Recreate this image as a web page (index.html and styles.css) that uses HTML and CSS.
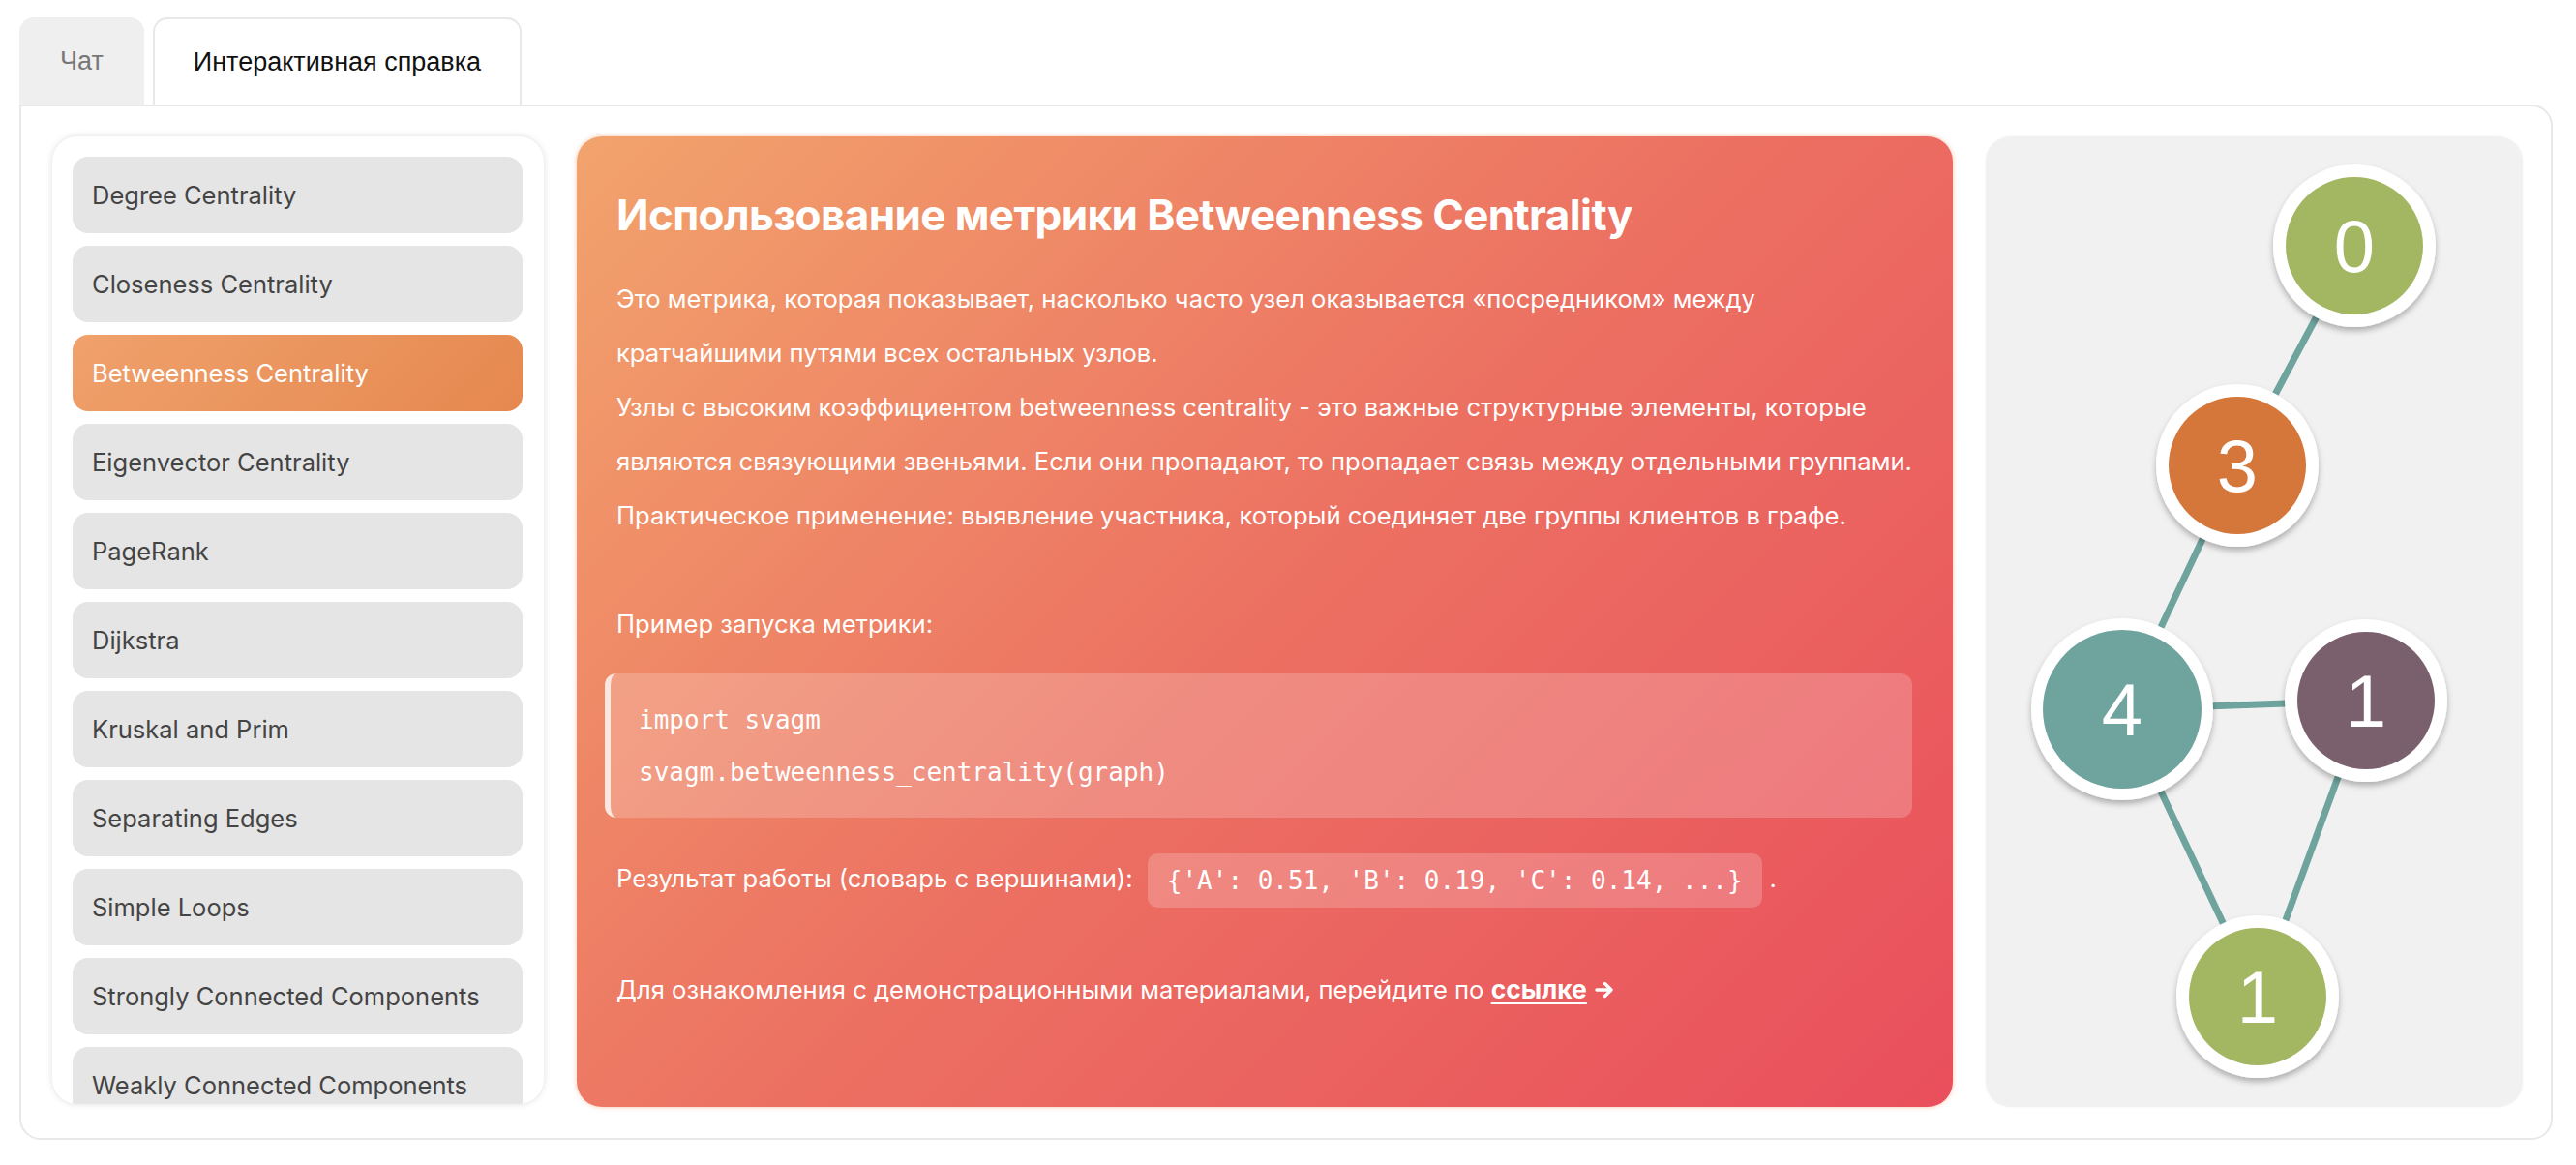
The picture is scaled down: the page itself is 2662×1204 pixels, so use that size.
FILE: index.html
```html
<!DOCTYPE html>
<html lang="ru">
<head>
<meta charset="utf-8">
<title>Интерактивная справка</title>
<link rel="stylesheet" href="styles.css">
</head>
<body>
<div class="tabs">
  <div class="tab">Чат</div>
  <div class="tab active">Интерактивная справка</div>
</div>
<main class="panel">
  <nav class="menu">
    <div class="menu-item">Degree Centrality</div>
    <div class="menu-item">Closeness Centrality</div>
    <div class="menu-item active">Betweenness Centrality</div>
    <div class="menu-item">Eigenvector Centrality</div>
    <div class="menu-item">PageRank</div>
    <div class="menu-item">Dijkstra</div>
    <div class="menu-item">Kruskal and Prim</div>
    <div class="menu-item">Separating Edges</div>
    <div class="menu-item">Simple Loops</div>
    <div class="menu-item">Strongly Connected Components</div>
    <div class="menu-item">Weakly Connected Components</div>
  </nav>
  <article class="doc">
    <h2 class="doc-title">Использование метрики Betweenness Centrality</h2>
    <p class="doc-text">Это метрика, которая показывает, насколько часто узел оказывается «посредником» между<br>кратчайшими путями всех остальных узлов.<br>Узлы с высоким коэффициентом betweenness centrality - это важные структурные элементы, которые<br>являются связующими звеньями. Если они пропадают, то пропадает связь между отдельными группами.<br>Практическое применение: выявление участника, который соединяет две группы клиентов в графе.<br><br>Пример запуска метрики:</p>
    <pre class="code">import svagm
svagm.betweenness_centrality(graph)</pre>
    <p class="doc-text">Результат работы (словарь с вершинами): <code class="pill">{'A': 0.51, 'B': 0.19, 'C': 0.14, ...}</code>.<br><br>Для ознакомления с демонстрационными материалами, перейдите по <a class="link" href="#">ссылке</a> <svg class="arrow" viewBox="0 0 22 22" xmlns="http://www.w3.org/2000/svg"><path d="M3 11h15M11.5 4.5 18 11l-6.5 6.5" fill="none" stroke="#fff" stroke-width="3.4" stroke-linecap="round" stroke-linejoin="round"/></svg></p>
  </article>
  <section class="graph">
    <svg class="graph-svg" viewBox="0 0 555 1003" xmlns="http://www.w3.org/2000/svg">
      <defs>
        <filter id="sh" x="-30%" y="-30%" width="160%" height="160%">
          <feDropShadow dx="0" dy="4" stdDeviation="3" flood-color="#000" flood-opacity="0.28"/>
        </filter>
      </defs>
      <g stroke="#6ea39e" stroke-width="7">
        <line x1="381" y1="113" x2="260" y2="340"/>
        <line x1="260" y1="340" x2="141" y2="592"/>
        <line x1="141" y1="592" x2="393" y2="583"/>
        <line x1="141" y1="592" x2="281" y2="889"/>
        <line x1="393" y1="583" x2="281" y2="889"/>
      </g>
      <g class="node">
        <circle cx="381" cy="113" r="84" fill="#fff" filter="url(#sh)"/>
        <circle cx="381" cy="113" r="71" fill="#a3b763"/>
        <text x="381" y="140">0</text>
      </g>
      <g class="node">
        <circle cx="260" cy="340" r="84" fill="#fff" filter="url(#sh)"/>
        <circle cx="260" cy="340" r="71" fill="#d5773b"/>
        <text x="260" y="367">3</text>
      </g>
      <g class="node">
        <circle cx="141" cy="592" r="94" fill="#fff" filter="url(#sh)"/>
        <circle cx="141" cy="592" r="82" fill="#6ea39e"/>
        <text x="141" y="619">4</text>
      </g>
      <g class="node">
        <circle cx="393" cy="583" r="84" fill="#fff" filter="url(#sh)"/>
        <circle cx="393" cy="583" r="71" fill="#7a606d"/>
        <text x="393" y="610">1</text>
      </g>
      <g class="node">
        <circle cx="281" cy="889" r="84" fill="#fff" filter="url(#sh)"/>
        <circle cx="281" cy="889" r="71" fill="#a3b763"/>
        <text x="281" y="916">1</text>
      </g>
    </svg>
  </section>
</main>
</body>
</html>
```

FILE: styles.css
```css
* {
  box-sizing: border-box;
}

html,
body {
  margin: 0;
  background: #ffffff;
}

body {
  padding: 18px 24px 0 20px;
  font-family: Inter, "Noto Sans", sans-serif;
}

.tabs {
  display: flex;
  gap: 9px;
  height: 90px;
}

.tab {
  display: flex;
  align-items: center;
  padding: 0 42px;
  background: #efefef;
  color: #777777;
  font-family: "Liberation Sans", Arial, sans-serif;
  font-size: 27px;
  border-radius: 15px 15px 0 0;
}

.tab.active {
  background: #ffffff;
  color: #111111;
  border: 2px solid #e8e8e8;
  border-bottom: none;
  padding: 0 40px;
}

.panel {
  display: grid;
  grid-template-columns: 508px 1fr 555px;
  gap: 34px;
  height: 1070px;
  padding: 31px 30px 32px 32px;
  border: 2px solid #e8e8e8;
  border-radius: 0 22px 22px 22px;
}

.menu {
  align-self: start;
  display: flex;
  flex-direction: column;
  gap: 13px;
  height: 1000px;
  padding: 21px 22px 0 21px;
  background: #ffffff;
  border-radius: 26px;
  box-shadow: 0 0 7px rgba(0, 0, 0, 0.13);
  overflow: hidden;
}

.menu-item {
  flex: none;
  display: flex;
  align-items: center;
  height: 79px;
  padding-left: 20px;
  background: #e5e5e5;
  color: #444444;
  font-size: 25.5px;
  border-radius: 16px;
}

.menu-item.active {
  background: linear-gradient(135deg, #f0a16c 0%, #e5884f 100%);
  color: #ffffff;
}

.doc {
  padding: 55px 42px 0 41px;
  background: linear-gradient(135deg, #f2a36c 0%, #ec7062 50%, #e94f5c 100%);
  color: #ffffff;
  border-radius: 26px;
  box-shadow: 0 0 5px rgba(240, 150, 100, 0.55);
}

.doc-title {
  margin: 0 0 33px;
  font-size: 44px;
  line-height: 52px;
  font-weight: 700;
  letter-spacing: -0.6px;
}

.doc-text {
  margin: 0;
  font-size: 25.6px;
  line-height: 56px;
  white-space: nowrap;
}

.code {
  margin: 23px 0 35px -12px;
  padding: 21px 29px 20px;
  background: rgba(255, 255, 255, 0.2);
  border-left: 6px solid rgba(255, 255, 255, 0.75);
  border-radius: 12px;
  font-family: "DejaVu Sans Mono", monospace;
  font-size: 26px;
  line-height: 54px;
  color: #ffffff;
}

.pill {
  display: inline-block;
  margin: 0 8px 0 8px;
  padding: 0 20px;
  line-height: 56px;
  background: rgba(255, 255, 255, 0.2);
  border-radius: 10px;
  font-family: "DejaVu Sans Mono", monospace;
  font-size: 26px;
  vertical-align: middle;
}

.link {
  color: #ffffff;
  font-weight: 700;
  font-size: 26.5px;
  text-decoration: underline;
  text-decoration-thickness: 2px;
  text-underline-offset: 4px;
}

.arrow {
  width: 22px;
  height: 22px;
  vertical-align: -2px;
}

.graph {
  background: #f1f1f1;
  border-radius: 26px;
  box-shadow: 0 0 3px rgba(0, 0, 0, 0.05);
  overflow: hidden;
}

.graph-svg {
  display: block;
  width: 100%;
  height: 100%;
}

.node text {
  fill: #ffffff;
  font-family: "Liberation Sans", Arial, sans-serif;
  font-size: 76px;
  text-anchor: middle;
}
```
